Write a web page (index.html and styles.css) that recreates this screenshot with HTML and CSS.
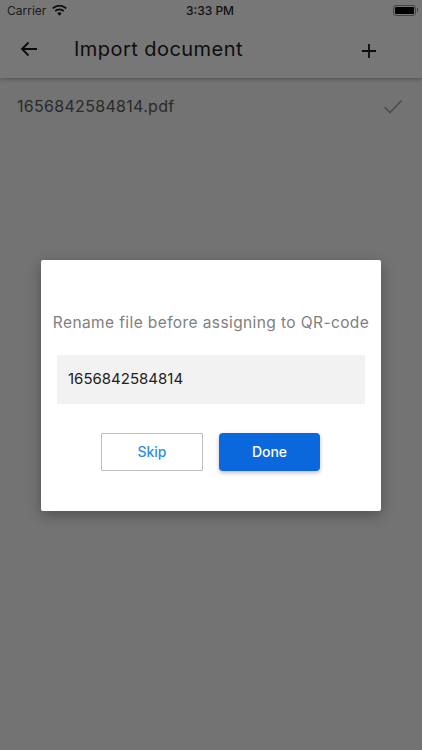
FILE: index.html
```html
<!DOCTYPE html>
<html lang="en">
<head>
<meta charset="utf-8">
<title>Import document</title>
<link rel="stylesheet" href="styles.css">
</head>
<body>
<div class="screen">
  <header class="top">
    <div class="status">
      <div class="status-left">
        <span>Carrier</span>
        <svg class="wifi" width="15" height="11" viewBox="0 0 16 12"><path d="M8 11.6 5.6 9a3.4 3.4 0 0 1 4.8 0L8 11.6Z"/><path d="M3.9 7.3 2.7 6a7.6 7.6 0 0 1 10.6 0l-1.2 1.3a5.9 5.9 0 0 0-8.2 0Z"/><path d="M1.2 4.4 0 3.1a11.5 11.5 0 0 1 16 0l-1.2 1.3a9.8 9.8 0 0 0-13.6 0Z"/></svg>
      </div>
      <span class="clock">3:33 PM</span>
      <div class="battery"><div class="battery-body"><div class="battery-fill"></div></div><div class="battery-cap"></div></div>
    </div>
    <div class="bar">
      <svg class="back" width="18" height="16" viewBox="0 0 18 16"><path d="M17 8H2M8.500 1.500 2 8l6.500 6.500" fill="none" stroke="#0c0c0c" stroke-width="1.800"/></svg>
      <h1 class="title">Import document</h1>
      <svg class="plus" width="16" height="16" viewBox="0 0 16 16"><path d="M8 1v14M1 8h14" fill="none" stroke="#0c0c0c" stroke-width="1.800"/></svg>
    </div>
  </header>
  <div class="row">
    <span class="file">1656842584814.pdf</span>
    <svg class="check" width="20" height="15" viewBox="0 0 20 15"><path d="M1.500 8 7 13.500 18.500 1.500" fill="none" stroke="#4c4c4c" stroke-width="1.600"/></svg>
  </div>
  <div class="overlay">
    <div class="dialog">
      <p class="prompt">Rename file before assigning to QR-code</p>
      <div class="field">1656842584814</div>
      <div class="actions">
        <button class="btn btn-skip">Skip</button>
        <button class="btn btn-done">Done</button>
      </div>
    </div>
  </div>
</div>
</body>
</html>
```
FILE: styles.css
```css
* { box-sizing: border-box; }
html, body { margin: 0; padding: 0; }
body { width: 422px; height: 750px; overflow: hidden; font-family: Inter, "Liberation Sans", sans-serif; background: #737373; }
.screen { position: relative; width: 422px; height: 750px; background: #737373; }
.top { height: 78px; background: #777777; box-shadow: 0 1px 4px rgba(0,0,0,.3); position: relative; }
.status { height: 20px; display: flex; align-items: center; justify-content: space-between; padding: 0 3px 0 7px; font-size: 12px; color: #0d0d0d; position: relative; }
.status-left { display: flex; align-items: center; gap: 6px; color: #1c1c1c; }
.wifi { fill: #0a0a0a; margin-top: 1px; }
.clock { position: absolute; left: 186px; top: 3px; font-weight: 500; line-height: 16px; color: #111; }
.battery { display: flex; align-items: center; margin-right: 1px; }
.battery-body { width: 23px; height: 11px; border: 1px solid #444; border-radius: 3px; padding: 1px; }
.battery-fill { width: 100%; height: 100%; background: #000; border-radius: 1px; }
.battery-cap { width: 1px; height: 4px; background: #444; margin-left: 1px; }
.bar { display: flex; align-items: center; height: 58px; padding: 0 45px 0 20px; }
.back { flex: none; }
.title { flex: 1; margin: 0 0 0 36px; font-size: 20px; font-weight: 400; letter-spacing: .45px; color: #0e0e0e; line-height: 24px; }
.plus { flex: none; margin-top: 4px; }
.row { display: flex; align-items: center; justify-content: space-between; height: 56px; padding: 0 19px 0 17px; }
.file { font-size: 16px; color: #2a2a2a; letter-spacing: .3px; }
.check { flex: none; }
.overlay { position: absolute; left: 41px; top: 260px; }
.dialog { width: 340px; height: 251px; background: #fff; border-radius: 2px; box-shadow: 0 4px 14px rgba(0,0,0,.3); padding: 53px 16px 0; }
.prompt { margin: 0 -16px; font-size: 15.500px; letter-spacing: .4px; line-height: 20px; color: #808080; text-align: center; white-space: nowrap; }
.field { margin-top: 22px; height: 49px; background: #f2f2f2; padding: 0 11px 2px; display: flex; align-items: center; font-size: 15px; color: #222; }
.actions { display: flex; gap: 16px; margin-top: 29px; padding-left: 44px; }
.btn { width: 102px; height: 38px; font-family: inherit; font-size: 14px; font-weight: 500; padding: 0 0 2px; }
.btn-skip { background: #fff; border: 1.500px solid #bdbdbd; color: #2f8ee0; border-radius: 1px; }
.btn-done { width: 101px; background: #0a68dc; border: 0; border-radius: 4px; color: #fff; box-shadow: 0 2px 4px rgba(0,0,0,.25); }
```
